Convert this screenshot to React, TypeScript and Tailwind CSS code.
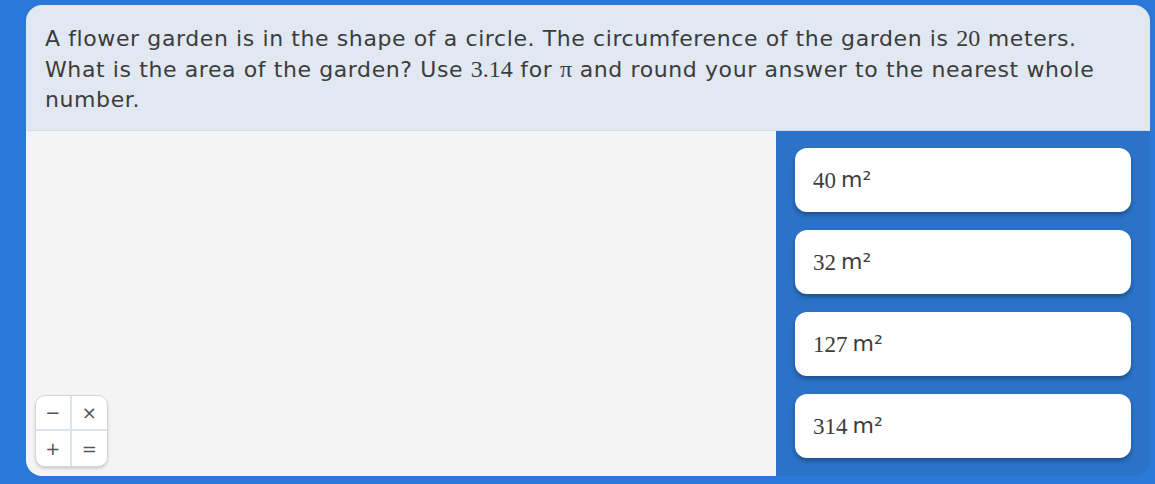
import React from "react";

const serif = { fontFamily: '"Liberation Serif", "DejaVu Serif", serif' };

function Num({ children }: { children: React.ReactNode }) {
  return (
    <span className="text-[24px] tracking-normal" style={serif}>
      {children}
    </span>
  );
}

function Option({ value }: { value: string }) {
  return (
    <div className="h-[64px] rounded-[12px] bg-white shadow-[0_3px_4px_rgba(0,0,0,0.3)] flex items-center px-[18px] text-[#3d3d3d]">
      <span className="text-[23px] leading-none" style={serif}>
        {value}
      </span>
      <span className="text-[22px] leading-none ml-[5px]" style={{ fontFamily: '"DejaVu Sans", sans-serif' }}>
        m²
      </span>
    </div>
  );
}

export default function App() {
  return (
    <div
      className="w-[1155px] h-[484px] bg-[#2a79d8] pt-[5px] pl-[26px] pr-[5px] pb-[8px] overflow-hidden"
      style={{ fontFamily: '"DejaVu Sans", "Noto Sans", sans-serif' }}
    >
      <div className="w-[1124px] h-[471px] rounded-[16px] overflow-hidden flex flex-col">
        <div className="bg-[#e1e8f2] h-[126px] shrink-0 border-b border-[#d4dbe4] pl-[19px] pr-[10px] pt-[18px] text-[22px] leading-[30px] text-[#3c3c3c] tracking-[0.6px] whitespace-nowrap">
          A flower garden is in the shape of a circle. The circumference of the garden is <Num>20</Num> meters.
          <br />
          What is the area of the garden? Use <Num>3.14</Num> for <Num>π</Num> and round your answer to the nearest whole
          <br />
          number.
        </div>
        <div className="flex flex-1 min-h-0">
          <div className="w-[750px] bg-[#f4f4f4] relative flex flex-col justify-end pl-[9px] pb-[9px]">
            <div
              className="w-[73px] h-[72px] rounded-[10px] bg-white border border-[#d6d6d6] shadow-[0_2px_3px_rgba(0,0,0,0.15)] grid grid-cols-2 grid-rows-2 text-[#555] text-[18px] overflow-hidden"
              style={{ fontFamily: '"DejaVu Sans", sans-serif' }}
            >
              <div className="flex items-center justify-center border-r-2 border-b-2 border-[#d9e4ef]">−</div>
              <div className="flex items-center justify-center border-b-2 border-[#d9e4ef]">×</div>
              <div className="flex items-center justify-center border-r-2 border-[#d9e4ef]">+</div>
              <div className="flex items-center justify-center">=</div>
            </div>
          </div>
          <div className="flex-1 bg-[#2a73c8] pl-[19px] pr-[19px] pt-[17px] flex flex-col gap-[18px]">
            <Option value="40" />
            <Option value="32" />
            <Option value="127" />
            <Option value="314" />
          </div>
        </div>
      </div>
    </div>
  );
}
